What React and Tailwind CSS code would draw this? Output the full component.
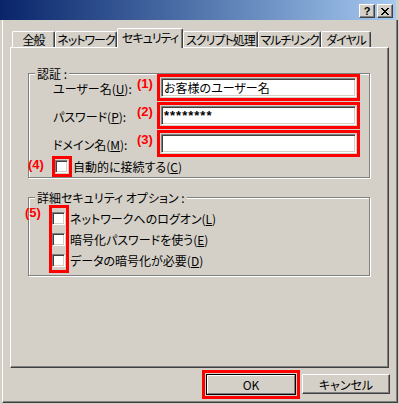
import React from 'react'

const raised =
    'border border-t-white border-l-white border-r-[#404040] border-b-[#404040] shadow-[inset_-1px_-1px_0_#808080]'
const sunken =
    'border border-t-[#808080] border-l-[#808080] border-r-white border-b-white shadow-[inset_1px_1px_0_#404040,inset_-1px_-1px_0_#d4d0c8]'
const etched =
    'relative border border-[#808080] shadow-[inset_1px_1px_0_#ffffff,1px_1px_0_#ffffff]'
const redBox = 'border-[3px] border-[#ff0000]'

const TABS = [
    { label: '全般', w: 'w-[43px]' },
    { label: 'ネットワーク', w: 'w-[62px]' },
    { label: 'セキュリティ', w: 'w-[66px]', active: true },
    { label: 'スクリプト処理', w: 'w-[75px]' },
    { label: 'マルチリンク', w: 'w-[63px]' },
    { label: 'ダイヤル', w: 'w-[50px]' },
]

const FIELDS = [
    { num: '(1)', label: 'ユーザー名', key: 'U', value: 'お客様のユーザー名' },
    { num: '(2)', label: 'パスワード', key: 'P', value: '********', secret: true },
    { num: '(3)', label: 'ドメイン名', key: 'M', value: '' },
]

const OPTIONS = [
    { label: 'ネットワークへのログオン', key: 'L' },
    { label: '暗号化パスワードを使う', key: 'E' },
    { label: 'データの暗号化が必要', key: 'D' },
]

function Num({ children, className = '' }) {
    return (
        <span className={`font-['Liberation_Sans',sans-serif] text-[13px] font-bold leading-[15px] text-[#ff0000] ${className}`}>
            {children}
        </span>
    )
}

function Checkbox() {
    return <div className={`h-[13px] w-[13px] bg-white ${sunken}`} />
}

function Tab({ label, w, active }) {
    if (active) {
        return (
            <div className={`${w} relative z-10 -mb-[1px] flex h-[20px] items-center justify-center whitespace-nowrap rounded-t-[2px] border-l border-r border-t border-l-white border-r-[#404040] border-t-white bg-[#d4d0c8] pb-[2px] tracking-[-1px] shadow-[inset_-1px_0_0_#808080]`}>
                {label}
            </div>
        )
    }
    return (
        <div className={`${w} flex h-[16px] items-center justify-center whitespace-nowrap rounded-t-[2px] border-l border-r border-t border-l-white border-r-[#404040] border-t-white tracking-[-1px] shadow-[inset_-1px_0_0_#808080]`}>
            {label}
        </div>
    )
}

export default function App() {
    return (
        <div className="flex h-[404px] w-[399px] flex-col overflow-hidden bg-[#d4d0c8] font-['Noto_Sans_CJK_JP','Liberation_Sans',sans-serif] text-[12px] leading-[15px] text-black [font-feature-settings:'palt']">
            {/* title bar */}
            <div className="mr-[3px] flex h-[20px] items-start justify-end gap-[2px] bg-gradient-to-r from-[#0a246a] to-[#a6caf0] pr-[3px] pt-[4px]">
                <div className={`flex h-[14px] w-[16px] items-center justify-center bg-[#d4d0c8] font-['Liberation_Sans',sans-serif] text-[11px] font-bold leading-none ${raised}`}>
                    ?
                </div>
                <div className={`flex h-[14px] w-[16px] items-center justify-center bg-[#d4d0c8] ${raised}`}>
                    <svg width="8" height="7" viewBox="0 0 8 7" shapeRendering="crispEdges">
                        <path d="M0 0h2v1H0zM6 0h2v1H6zM1 1h2v1H1zM5 1h2v1H5zM2 2h4v1H2zM3 3h2v1H3zM2 4h4v1H2zM1 5h2v1H1zM5 5h2v1H5zM0 6h2v1H0zM6 6h2v1H6z" fill="#000" />
                    </svg>
                </div>
            </div>

            {/* window body */}
            <div className="mb-[1px] ml-[2px] mr-[1px] flex flex-1 flex-col border-b border-l border-r border-b-[#404040] border-l-white border-r-[#404040] shadow-[inset_-1px_-1px_0_#808080]">
                <div className="ml-[9px] mt-[8px] flex h-[19px] items-end">
                    {TABS.map((t) => (
                        <Tab key={t.label} {...t} />
                    ))}
                </div>

                <div className="ml-[7px] h-[321px] w-[379px] border-b border-l border-r border-t border-b-[#404040] border-l-white border-r-[#404040] border-t-white pl-[17px] pt-[25px] shadow-[inset_-1px_-1px_0_#808080]">
                    {/* 認証 */}
                    <div className={`h-[105px] w-[342px] ${etched}`}>
                        <span className="absolute -top-[8px] left-[6px] bg-[#d4d0c8] px-[2px]">認証 :</span>

                        <div className="flex flex-col gap-[1px] pl-[24px]">
                            {FIELDS.map((f) => (
                                <div key={f.key} className="flex items-center">
                                    <span className="w-[84px] whitespace-nowrap pt-[1px]">
                                        {f.label}(<u>{f.key}</u>):
                                    </span>
                                    <Num className="mb-[8px] w-[20px]">{f.num}</Num>
                                    <div className={`${redBox} p-[1px]`}>
                                        <div className={`flex h-[19px] w-[195px] items-center bg-white pl-[2px] ${sunken}`}>
                                            {f.secret ? (
                                                <span className="font-['Liberation_Sans',sans-serif] text-[13px] font-bold tracking-[1px]">
                                                    {f.value}
                                                </span>
                                            ) : (
                                                f.value
                                            )}
                                        </div>
                                    </div>
                                </div>
                            ))}
                        </div>

                        <div className="-mt-[1px] flex items-center">
                            <Num className="-ml-[1px] w-[24px] pb-[4px]">(4)</Num>
                            <div className={`${redBox} py-[1px] pr-[1px]`}>
                                <Checkbox />
                            </div>
                            <span className="ml-[1px]">
                                自動的に接続する(<u>C</u>)
                            </span>
                        </div>
                    </div>

                    {/* 詳細セキュリティ オプション */}
                    <div className={`mt-[19px] h-[79px] w-[342px] pt-[7px] ${etched}`}>
                        <span className="absolute -top-[8px] left-[6px] bg-[#d4d0c8] px-[2px]">
                            詳細セキュリティ オプション :
                        </span>

                        <div className="-ml-[4px] flex items-start">
                            <Num className="w-[24px]">(5)</Num>
                            <div className={`${redBox} flex flex-col gap-[8px] pb-[3px] pr-[1px] pt-[4px]`}>
                                {OPTIONS.map((o) => (
                                    <Checkbox key={o.key} />
                                ))}
                            </div>
                            <div className="ml-[1px] flex flex-col gap-[8px] pt-[7px]">
                                {OPTIONS.map((o) => (
                                    <span key={o.key} className="h-[13px] leading-[13px]">
                                        {o.label}(<u>{o.key}</u>)
                                    </span>
                                ))}
                            </div>
                        </div>
                    </div>
                </div>

                {/* buttons */}
                <div className="mr-[7px] mt-[2px] flex items-start justify-end gap-[2px]">
                    <div className={`${redBox} p-[1px]`}>
                        <div className="h-[21px] w-[90px] border border-black">
                            <div className="flex h-full w-full items-center justify-center border border-b-[#808080] border-l-white border-r-[#808080] border-t-white">
                                OK
                            </div>
                        </div>
                    </div>
                    <div className={`mt-[4px] flex h-[20px] w-[88px] items-center justify-center ${raised}`}>
                        キャンセル
                    </div>
                </div>
            </div>
        </div>
    )
}
